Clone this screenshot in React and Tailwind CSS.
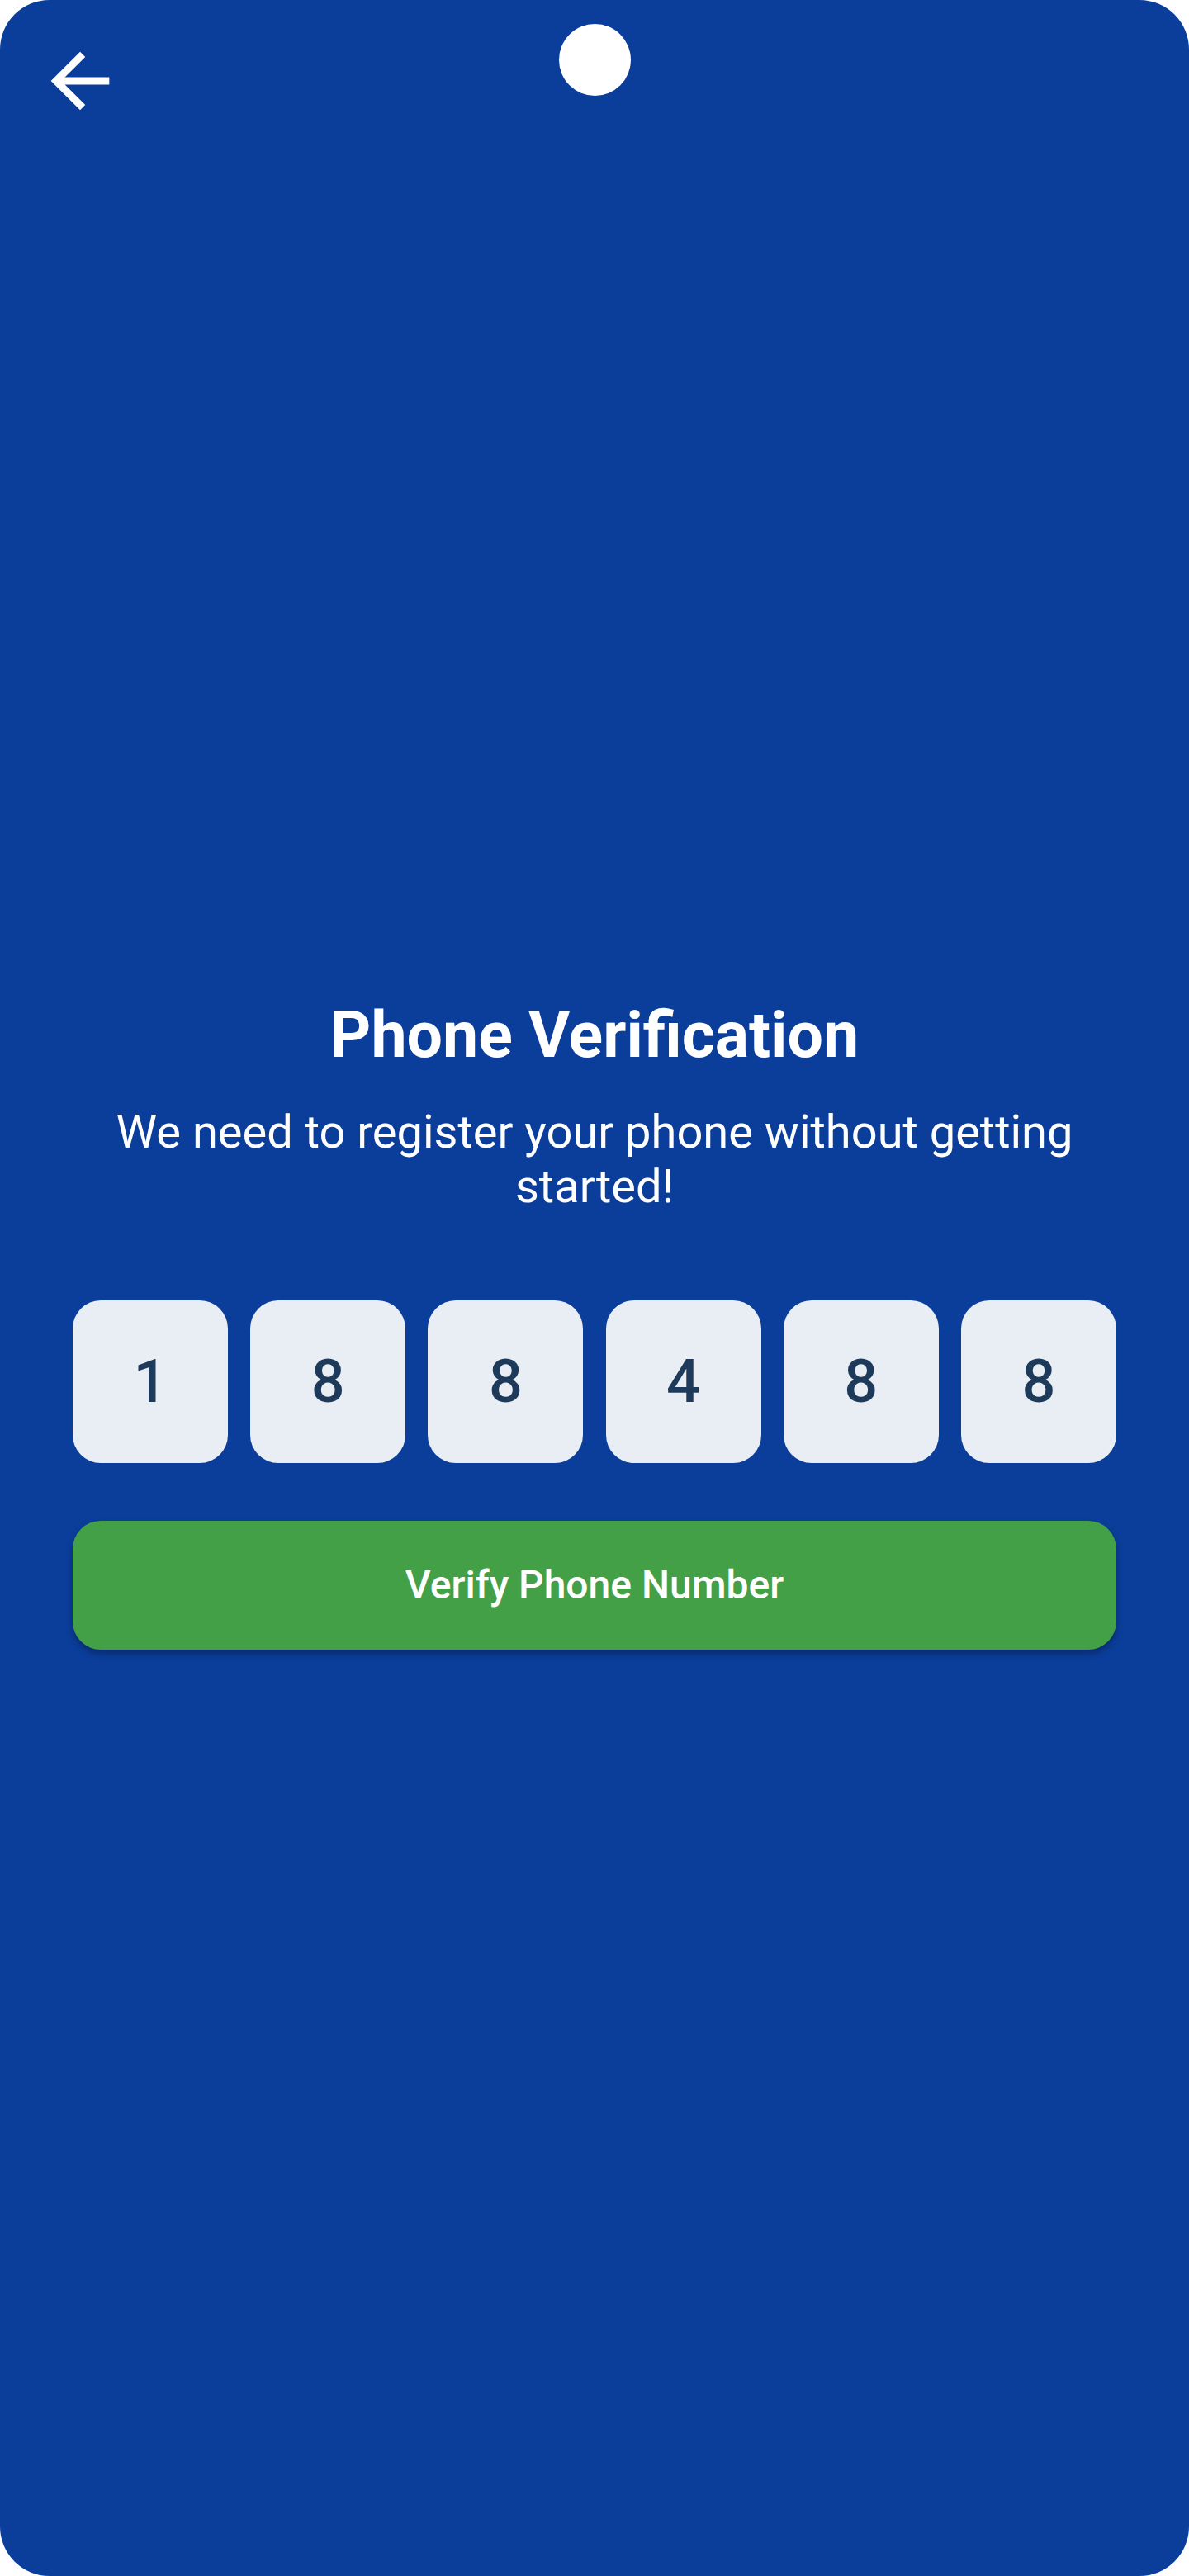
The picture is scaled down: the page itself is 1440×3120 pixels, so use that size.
import React, { useState } from 'react';

const DIGITS = ['1', '8', '8', '4', '8', '8'];

function BackArrow() {
  return (
    <svg width="106" height="106" viewBox="0 0 24 24" fill="#ffffff" aria-hidden="true">
      <path d="M20 11H7.83l5.59-5.59L12 4l-8 8 8 8 1.41-1.41L7.83 13H20v-2z" />
    </svg>
  );
}

export default function App() {
  const [code] = useState(DIGITS);

  return (
    <div className="min-h-[3120px] w-[1440px] bg-white font-['Roboto',sans-serif]">
      <div className="relative flex min-h-[3120px] flex-col rounded-[60px] bg-[#0b3e9b]">
        {/* camera cutout */}
        <div className="absolute left-[677px] top-[29px] h-[87px] w-[87px] rounded-full bg-white" />

        <div className="pl-[44px] pt-[45px]">
          <button type="button" className="block">
            <BackArrow />
          </button>
        </div>

        <div className="flex flex-col px-[88px] pt-[1055px]">
          <h1 className="text-center text-[77px] font-bold leading-[96px] text-white">
            Phone Verification
          </h1>
          <p className="mt-[36px] px-[10px] text-center text-[56px] leading-[66px] text-white">
            We need to register your phone without getting started!
          </p>

          <div className="mt-[105px] flex justify-between">
            {code.map((d, i) => (
              <div
                key={i}
                className="flex h-[197px] w-[188px] items-center justify-center rounded-[34px] bg-[#e8eef4] text-[72px] font-medium text-[#1e3a5a]"
              >
                {d}
              </div>
            ))}
          </div>

          <button
            type="button"
            className="mt-[70px] flex h-[156px] w-full items-center justify-center rounded-[34px] bg-[#43a047] text-[48px] font-medium text-white shadow-[0_5px_8px_rgba(0,0,0,0.3)]"
          >
            Verify Phone Number
          </button>
        </div>
      </div>
    </div>
  );
}
